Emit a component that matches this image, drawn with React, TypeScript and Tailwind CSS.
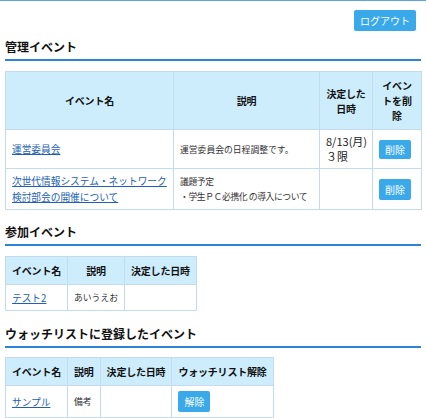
import React from "react";

const th = "border border-[#c3dbec] bg-[#cdedfd] px-[6px] py-[6px] text-[10px] leading-[15px] font-bold tracking-[-0.2px] text-[#111] text-center align-middle";
const td = "border border-[#c3dbec] px-[6px] py-[4px] leading-[15px] align-middle";
const desc = "text-[8.8px] text-[#333]";
const plain = "text-[10px] text-[#222]";
const link = "text-[9.7px] text-[#2360b5] underline";
const btn = "rounded-[2px] bg-[#3aa9ea] px-[6px] text-[10px] text-white";

function Heading({ children, className }: { children: React.ReactNode; className?: string }) {
  return (
    <h2 className={"border-b-2 border-[#2a86d4] pb-[2px] text-[12px] font-bold leading-[20px] text-[#111] " + (className ?? "")}>
      {children}
    </h2>
  );
}

export default function App() {
  return (
    <div
      className="min-h-[418px] w-[426px] border-t border-[#5ea4dc] bg-white px-[5px]"
      style={{ fontFamily: '"Noto Sans CJK JP", "Noto Sans", sans-serif' }}
    >
      <div className="flex justify-end pr-[5px] pt-[9px]">
        <button className={btn + " py-[3px] leading-[15px]"}>ログアウト</button>
      </div>

      {/* 管理イベント */}
      <Heading className="mt-[6px]">管理イベント</Heading>
      <table className="mt-[10px] w-[416px] table-fixed border-collapse">
        <colgroup>
          <col className="w-[168px]" />
          <col className="w-[146px]" />
          <col className="w-[53px]" />
          <col className="w-[49px]" />
        </colgroup>
        <thead>
          <tr>
            <th className={th}>イベント名</th>
            <th className={th}>説明</th>
            <th className={th}>決定した日時</th>
            <th className={th}>イベントを削除</th>
          </tr>
        </thead>
        <tbody>
          <tr>
            <td className={td + " " + plain}>
              <a href="#" className={link}>運営委員会</a>
            </td>
            <td className={td + " " + desc}>運営委員会の日程調整です。</td>
            <td className={td + " text-[11px] text-[#222]"}>
              8/13(月)
              <br />
              ３限
            </td>
            <td className={td + " " + plain}>
              <button className={btn + " py-[2px] leading-[15px]"}>削除</button>
            </td>
          </tr>
          <tr>
            <td className={td + " " + plain}>
              <a href="#" className={link}>
                次世代情報システム・ネットワーク検討部会の開催について
              </a>
            </td>
            <td className={td + " " + desc + " whitespace-nowrap tracking-[-0.4px]"}>
              議題予定
              <br />
              ・学生ＰＣ必携化 の導入について
            </td>
            <td className={td + " " + plain}></td>
            <td className={td + " " + plain}>
              <button className={btn + " py-[3px] leading-[15px]"}>削除</button>
            </td>
          </tr>
        </tbody>
      </table>

      {/* 参加イベント */}
      <Heading className="mt-[12px]">参加イベント</Heading>
      <table className="mt-[10px] border-collapse whitespace-nowrap">
        <thead>
          <tr>
            <th className={th}>イベント名</th>
            <th className={th}>説明</th>
            <th className={th}>決定した日時</th>
          </tr>
        </thead>
        <tbody>
          <tr className="h-[26px]">
            <td className={td + " " + plain}>
              <a href="#" className={link}>テスト2</a>
            </td>
            <td className={td + " " + desc}>あいうえお</td>
            <td className={td + " " + plain}></td>
          </tr>
        </tbody>
      </table>

      {/* ウォッチリスト */}
      <Heading className="mt-[13px]">ウォッチリストに登録したイベント</Heading>
      <table className="mt-[9px] border-collapse whitespace-nowrap">
        <thead>
          <tr>
            <th className={th}>イベント名</th>
            <th className={th}>説明</th>
            <th className={th}>決定した日時</th>
            <th className={th}>ウォッチリスト解除</th>
          </tr>
        </thead>
        <tbody>
          <tr className="h-[32px]">
            <td className={td + " " + plain}>
              <a href="#" className={link}>サンプル</a>
            </td>
            <td className={td + " " + desc}>備考</td>
            <td className={td + " " + plain}></td>
            <td className={td + " " + plain}>
              <button className={btn + " py-[3px] leading-[15px]"}>解除</button>
            </td>
          </tr>
        </tbody>
      </table>
    </div>
  );
}
